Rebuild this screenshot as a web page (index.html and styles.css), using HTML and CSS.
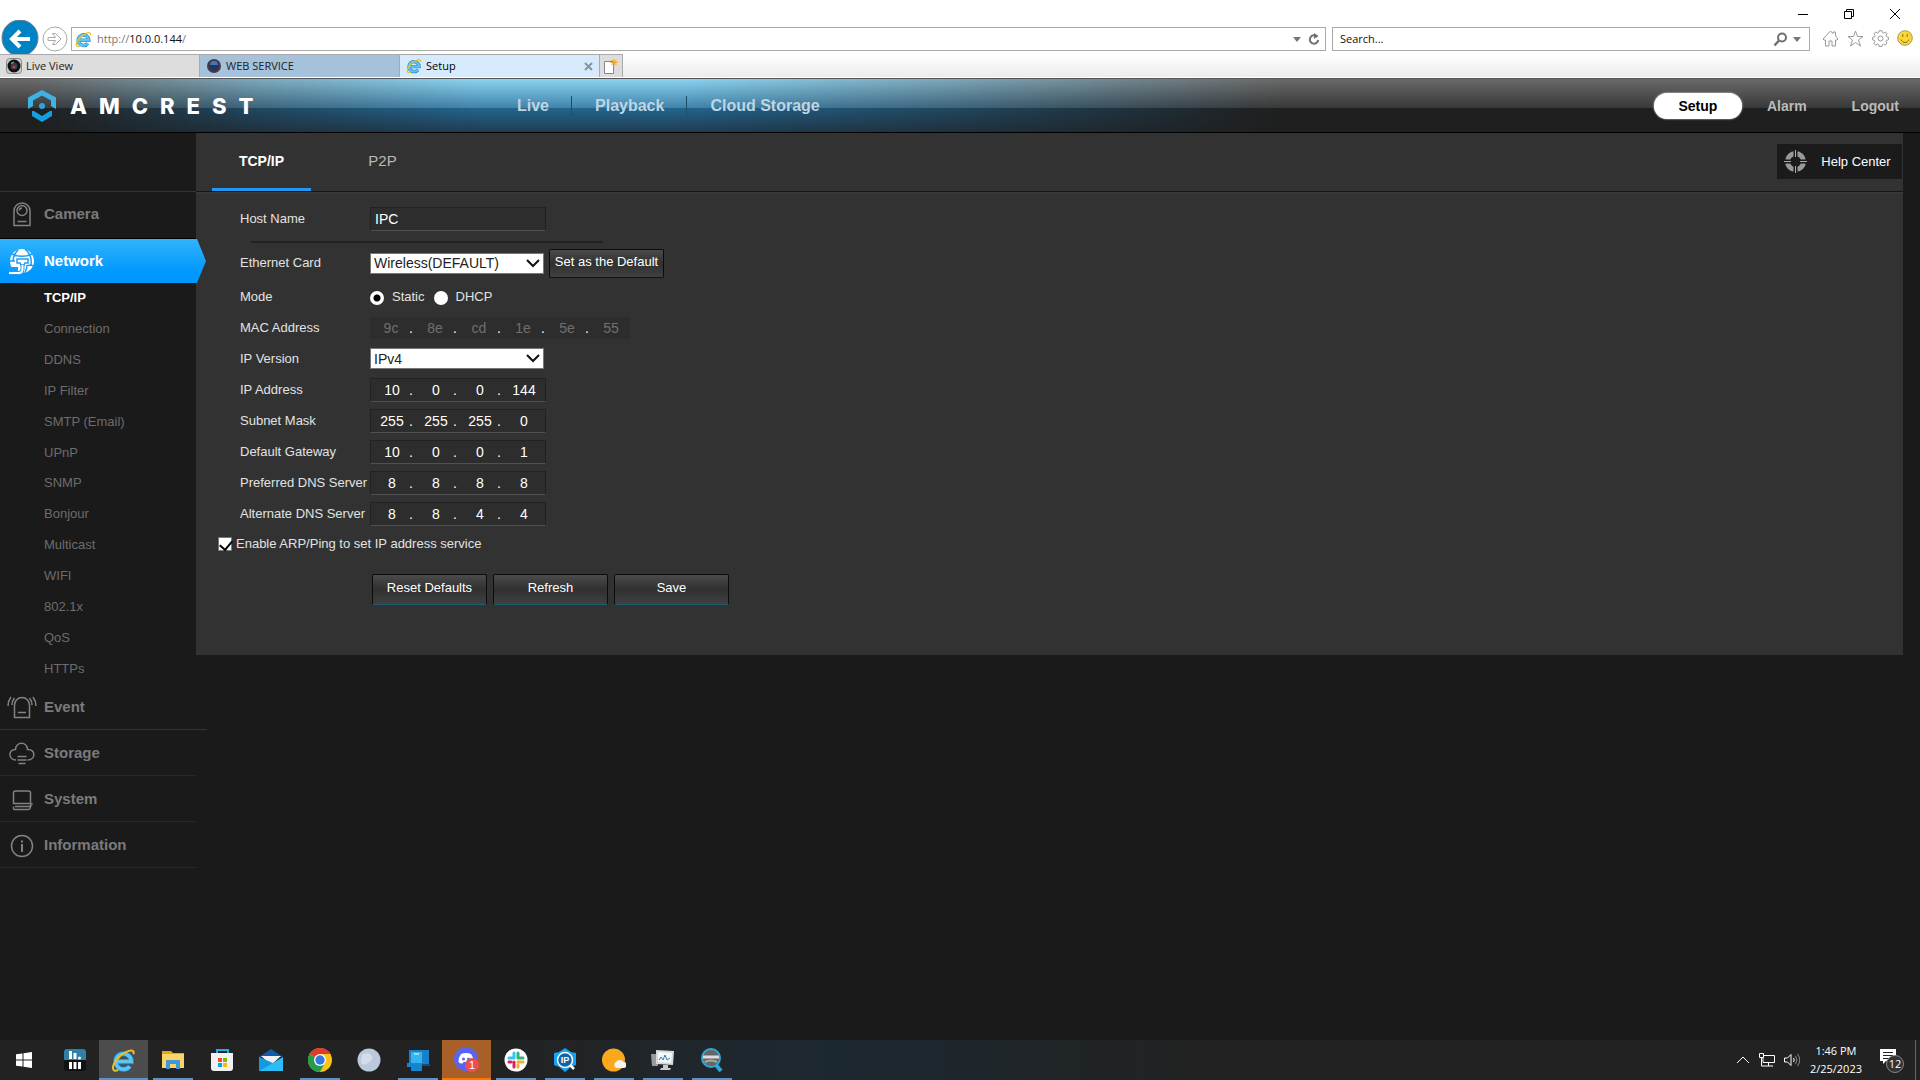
FILE: index.html
```html
<!DOCTYPE html>
<html lang="en">
<head>
<meta charset="utf-8">
<title>Setup</title>
<link rel="stylesheet" href="styles.css">
</head>
<body>
<svg class="defs" aria-hidden="true">
  <symbol id="ie" viewBox="0 0 24 24">
    <path d="M5 13h14.500a7.500 7.500 0 1 0-1.500 4.500" fill="none" stroke="#1c84c6" stroke-width="5"/>
    <path d="M5 13h14.500a7.500 7.500 0 1 0-1.500 4.500" fill="none" stroke="#5cc5f2" stroke-width="3.400"/>
    <path d="M21.500 6c1-3-1-4.500-5-3C9 5.500 1 15 2 20c.5 2.500 3 2 5 1" fill="none" stroke="#f4bd1c" stroke-width="1.900"/>
  </symbol>
</svg>

<header class="browser">
  <div class="window-controls">
    <button type="button" aria-label="Minimize"><svg width="12" height="12" viewBox="0 0 12 12"><path d="M1 6.500h10"/></svg></button>
    <button type="button" aria-label="Restore"><svg width="12" height="12" viewBox="0 0 12 12"><path d="M1.500 3.500h7v7h-7zM3.500 3.500v-2h7v7h-2"/></svg></button>
    <button type="button" aria-label="Close"><svg width="12" height="12" viewBox="0 0 12 12"><path d="M1 1l10 10M11 1L1 11"/></svg></button>
  </div>
  <div class="address-row">
    <button type="button" class="back" aria-label="Back"><svg width="38" height="34" viewBox="0 0 38 34"><circle cx="19" cy="18" r="18" fill="#0083c4" stroke="#6f7c84"/><path d="M12 19h17M19 11l-8 8 8 8" fill="none" stroke="#fff" stroke-width="4"/></svg></button>
    <button type="button" class="forward" aria-label="Forward"><svg width="26" height="26" viewBox="0 0 26 26"><circle cx="13" cy="13" r="12" fill="#fff" stroke="#aaa"/><path d="M6 11.500h7.500l-3-4h3l5.500 5.500-5.500 5.500h-3l3-4H6z" fill="none" stroke="#aaa"/></svg></button>
    <div class="box address">
      <svg width="17" height="17"><use href="#ie"/></svg>
      <a href="#" class="url">http://<b>10.0.0.144</b>/</a>
      <svg width="8" height="5" viewBox="0 0 8 5"><path d="M0 0h8L4 5z" fill="#777"/></svg>
      <svg width="12" height="13" viewBox="0 0 12 13"><path d="M9 3.500a4.200 4.200 0 1 0 1.200 3.500" fill="none" stroke="#707070" stroke-width="2"/><path d="M6 0l4.500 3L6 6z" fill="#707070"/></svg>
    </div>
    <div class="box search">
      <input type="text" placeholder="Search..." aria-label="Search">
      <svg width="15" height="15" viewBox="0 0 15 15"><circle cx="9" cy="5.500" r="4" fill="none" stroke="#707070" stroke-width="2"/><path d="M6 8.500L1.500 13.500" stroke="#707070" stroke-width="2.500"/></svg>
      <svg width="8" height="5" viewBox="0 0 8 5"><path d="M0 0h8L4 5z" fill="#777"/></svg>
    </div>
    <div class="tools">
      <svg width="17" height="17" viewBox="0 0 17 17"><path d="M1 9l7.500-8L11 3.500V2h2.500v4L16 9l-1 1h-1.500v6H10v-5H7v5H3.500v-6H2z"/></svg>
      <svg width="17" height="17" viewBox="0 0 17 17"><path d="M8.500 1l2 5.500h5.500L11.500 10l2 6-5-3.500-5 3.500 2-6L1 6.500h5.500z"/></svg>
      <svg width="17" height="17" viewBox="0 0 17 17"><path d="M7 .7h3l.4 2 1.200.5 1.700-1.200 1.900 1.900L14 5.600l.5 1.100 1.900.5v2.700l-2 .5-.5 1.200 1.200 1.700-1.900 1.900-1.700-1.200-1.100.5-.4 1.900H7l-.4-2-1.200-.5-1.700 1.200-1.900-1.900L3 11.500l-.5-1.100-1.900-.5V7.200l2-.5.500-1.200-1.200-1.700 1.900-1.900 1.700 1.200 1.100-.5z"/><circle cx="8.500" cy="8.500" r="2.500"/></svg>
      <svg width="16" height="16" viewBox="0 0 16 16"><circle cx="8" cy="8" r="7.300" style="fill:#fbd738;stroke:#a99a5a"/><path d="M5.800 4v3M10.200 4v3M4 9.500c1.500 4 6.500 4 8 0" style="stroke:#846d10"/></svg>
    </div>
  </div>
  <nav class="browser-tabs" aria-label="Browser tabs">
    <a href="#" class="btab"><svg width="16" height="16" viewBox="0 0 16 16"><rect x=".5" y=".5" width="15" height="15" rx="3" fill="#ccc" stroke="#888"/><circle cx="8" cy="8" r="6.500" fill="#101010"/><circle cx="8" cy="8" r="3.500" fill="#33404a"/><circle cx="8" cy="9" r="1.500" fill="#d33"/><path d="M5 5.500l3-1.500" stroke="#8cc"/></svg>Live View</a>
    <a href="#" class="btab web"><svg width="16" height="16" viewBox="0 0 16 16"><circle cx="8" cy="8" r="6" fill="#24345f" stroke="#4a3a48" stroke-width="2"/><path d="M4 7a4 4 0 0 1 8 0z" fill="#3f78b5"/></svg>WEB SERVICE</a>
    <a href="#" class="btab current"><svg width="16" height="16"><use href="#ie"/></svg>Setup<svg class="close" width="9" height="9" viewBox="0 0 9 9"><path d="M1 1l7 7M8 1L1 8" stroke="#8494a3" stroke-width="2"/></svg></a>
    <button type="button" class="newtab" aria-label="New tab"><svg width="16" height="17" viewBox="0 0 16 17"><path d="M1.500 3.500h9v12h-9z" fill="#fff" stroke="#888"/><path d="M11 1v7M7.500 4.500h7M8.500 2l5 5M13.500 2l-5 5" stroke="#f3a11f"/></svg></button>
  </nav>
</header>

<div class="app">
  <div class="topbar">
    <a href="#" class="brand">
      <svg width="30" height="33" viewBox="0 0 30 33"><path d="M1 20V8.500L15 1l14 7.500V20l-5-3v-5.500L15 6.500 6 11.500V17z" fill="#3fb2e4"/><circle cx="15" cy="17" r="3" fill="#2aa6de"/><path d="M5 22l2 0 8 5 8-5h2v5l-10 6-10-6z" fill="#13a0e0"/></svg>
      <span class="wordmark">AMCREST</span>
    </a>
    <nav class="views" aria-label="Views">
      <a href="#">Live</a><a href="#">Playback</a><a href="#">Cloud Storage</a>
    </nav>
    <nav class="account" aria-label="Account">
      <a href="#" class="on">Setup</a><a href="#">Alarm</a><a href="#">Logout</a>
    </nav>
  </div>

  <div class="body">
    <nav class="side" aria-label="Settings">
      <a href="#" class="group first"><svg width="32" height="26" viewBox="0 0 32 26"><path d="M8 24.500V10a8 8 0 0 1 16 0v14.500zM11.500 20.500h9"/><circle cx="16" cy="9.500" r="5"/><path d="M13.500 9.500A2.500 2.500 0 0 1 16 7"/></svg>Camera</a>
      <a href="#" class="group active"><svg width="32" height="28" viewBox="0 0 32 28"><circle cx="16" cy="14" r="12" fill="#fff" stroke="none"/><path d="M6 7c5 3 14 3 20 0M3 14h6M12 3c-4 4-5 7-5 11M19 2c5 4 7 9 6 16M20 19c3-1 5-1 8 0M19 26l2-6" stroke="#1d9df5"/><path d="M3 20h9v6H3z" fill="#0f9ffb" stroke="none"/><path d="M11 12h11v4h-3l-1 2h-3l-1-2h-3z" fill="#fff" stroke="#1d9df5"/><path d="M16.500 18v4q0 4-4 4H3" stroke="#1d9df5" stroke-width="4"/><path d="M16.500 18v4q0 4-4 4H3" stroke="#fff" stroke-width="2"/></svg>Network</a>
      <div class="subs">
        <a href="#" class="on">TCP/IP</a><a href="#">Connection</a><a href="#">DDNS</a><a href="#">IP Filter</a><a href="#">SMTP (Email)</a><a href="#">UPnP</a><a href="#">SNMP</a><a href="#">Bonjour</a><a href="#">Multicast</a><a href="#">WIFI</a><a href="#">802.1x</a><a href="#">QoS</a><a href="#">HTTPs</a>
      </div>
      <a href="#" class="group wide"><svg width="32" height="26" viewBox="0 0 32 26"><path d="M8.500 23.500V11a7.500 7.500 0 0 1 15 0v12.500zM12 18.500h8M5 3q-3 4-3 9M8.500 4q-2.500 3-2.500 7M27 3q3 4 3 9M23.500 4q2.500 3 2.500 7"/></svg>Event</a>
      <a href="#" class="group"><svg width="32" height="26" viewBox="0 0 32 26"><path d="M10 20C2 20 2 9 9.500 9.500 10 1 21 1 21.500 9.500 30 9 30 20 21.500 20M11.500 16.500h9M11.500 20h9M12.500 23.500h7"/></svg>Storage</a>
      <a href="#" class="group"><svg width="32" height="26" viewBox="0 0 32 26"><path d="M7.500 7q0-2 2-2h13q2 0 2 2v10.500h-17zM9 20.500h14.500l3-3M7.500 20.500v2q0 1 1 1h14q1 0 1.500-1l1-3"/></svg>System</a>
      <a href="#" class="group"><svg width="32" height="26" viewBox="0 0 32 26"><circle cx="16" cy="14" r="10.500"/><path d="M16 12v8M16 8.500v2" stroke-width="2"/></svg>Information</a>
    </nav>

    <main class="panel">
      <div class="tabs">
        <a href="#" class="on">TCP/IP</a>
        <a href="#">P2P</a>
        <a href="#" class="help"><svg width="23" height="23" viewBox="0 0 23 23"><circle cx="11.500" cy="11.500" r="8" fill="none" stroke="#999" stroke-width="5"/><path d="M11.500 0v8M11.500 15v8M0 11.500h8M15 11.500h8" stroke="#1b1b1b" stroke-width="4"/><path d="M11.500 0v7M11.500 16v7M0 11.500h7M16 11.500h7" stroke="#aaa" stroke-width="1"/></svg>Help Center</a>
      </div>
      <form class="settings">
        <div class="row host"><label for="host">Host Name</label><input id="host" class="text" type="text" value="IPC"></div>
        <hr>
        <div class="row card"><label for="card">Ethernet Card</label><span class="pick"><select id="card"><option>Wireless(DEFAULT)</option></select><svg width="14" height="9" viewBox="0 0 14 9"><path d="M1 1l6 6 6-6"/></svg></span><button type="button" class="btn default">Set as the Default</button></div>
        <div class="row"><span>Mode</span><span class="radios"><input type="radio" name="mode" id="static" checked><label for="static">Static</label><input type="radio" name="mode" id="dhcp"><label for="dhcp">DHCP</label></span></div>
        <div class="row"><span>MAC Address</span><span class="octets mac"><input aria-label="MAC 1" value="9c" disabled><i>.</i><input aria-label="MAC 2" value="8e" disabled><i>.</i><input aria-label="MAC 3" value="cd" disabled><i>.</i><input aria-label="MAC 4" value="1e" disabled><i>.</i><input aria-label="MAC 5" value="5e" disabled><i>.</i><input aria-label="MAC 6" value="55" disabled></span></div>
        <div class="row"><label for="ver">IP Version</label><span class="pick"><select id="ver"><option>IPv4</option></select><svg width="14" height="9" viewBox="0 0 14 9"><path d="M1 1l6 6 6-6"/></svg></span></div>
        <div class="row"><span>IP Address</span><span class="octets"><input aria-label="IP 1" value="10"><i>.</i><input aria-label="IP 2" value="0"><i>.</i><input aria-label="IP 3" value="0"><i>.</i><input aria-label="IP 4" value="144"></span></div>
        <div class="row"><span>Subnet Mask</span><span class="octets"><input aria-label="Mask 1" value="255"><i>.</i><input aria-label="Mask 2" value="255"><i>.</i><input aria-label="Mask 3" value="255"><i>.</i><input aria-label="Mask 4" value="0"></span></div>
        <div class="row"><span>Default Gateway</span><span class="octets"><input aria-label="Gateway 1" value="10"><i>.</i><input aria-label="Gateway 2" value="0"><i>.</i><input aria-label="Gateway 3" value="0"><i>.</i><input aria-label="Gateway 4" value="1"></span></div>
        <div class="row"><span>Preferred DNS Server</span><span class="octets"><input aria-label="Preferred DNS 1" value="8"><i>.</i><input aria-label="Preferred DNS 2" value="8"><i>.</i><input aria-label="Preferred DNS 3" value="8"><i>.</i><input aria-label="Preferred DNS 4" value="8"></span></div>
        <div class="row"><span>Alternate DNS Server</span><span class="octets"><input aria-label="Alternate DNS 1" value="8"><i>.</i><input aria-label="Alternate DNS 2" value="8"><i>.</i><input aria-label="Alternate DNS 3" value="4"><i>.</i><input aria-label="Alternate DNS 4" value="4"></span></div>
        <div class="arp"><input type="checkbox" id="arp" checked><label for="arp">Enable ARP/Ping to set IP address service</label></div>
        <div class="actions"><button type="button" class="btn">Reset Defaults</button><button type="button" class="btn">Refresh</button><button type="button" class="btn">Save</button></div>
      </form>
    </main>
  </div>
</div>

<footer class="taskbar">
  <button type="button" class="start" aria-label="Start"><svg width="16" height="16" viewBox="0 0 16 16"><path d="M0 2.300L6.500 1.400v6.100H0zM7.500 1.200L16 0v7.500H7.500zM0 8.500h6.500v6.100L0 13.700zM7.500 8.500H16V16l-8.500-1.200z" fill="#fff"/></svg></button>
  <button type="button" aria-label="Monitor"><svg width="24" height="24" viewBox="0 0 24 24"><rect x="1" y="1" width="22" height="22" rx="3" fill="#101214"/><path d="M1 12V4q0-3 3-3h16q3 0 3 3v8z" fill="#2f7fa6"/><path d="M7.500 3v8M12 5v6M7.500 14v7M12 14v7M16.500 14v7" stroke="#fff" stroke-width="3"/><circle cx="16.500" cy="10" r="1.500" fill="#fff"/></svg></button>
  <button type="button" class="open focus" aria-label="Internet Explorer"><svg width="25" height="25"><use href="#ie"/></svg></button>
  <button type="button" class="open" aria-label="File Explorer"><svg width="24" height="24" viewBox="0 0 24 24"><path d="M1 3h9l2 2h11v15H1z" fill="#e5a61c"/><path d="M1 6h22v14H1z" fill="#fbd466"/><path d="M5 21v-8q0-1 1-1h12q1 0 1 1v8h-4v-5H9v5z" fill="#3f97d8"/></svg></button>
  <button type="button" aria-label="Store"><svg width="24" height="24" viewBox="0 0 24 24"><path d="M7 6V2h11v4" fill="none" stroke="#1fb0ea" stroke-width="2"/><path d="M1 5h22v15q0 3-3 3H4q-3 0-3-3z" fill="#f1f1f1"/><path d="M8 10h4v4H8z" fill="#f25022"/><path d="M13 10h4v4h-4z" fill="#7fba00"/><path d="M8 15h4v4H8z" fill="#00a4ef"/><path d="M13 15h4v4h-4z" fill="#ffb900"/></svg></button>
  <button type="button" aria-label="Mail"><svg width="24" height="24" viewBox="0 0 24 24"><path d="M0 9l12-8 12 8z" fill="#0f5ca8"/><path d="M2 8h20l-10 9z" fill="#f1f1f1"/><path d="M0 9l12 7 12-7v14H0z" fill="#2dbcf4"/><path d="M0 23l14-8L0 9z" fill="#1498e0"/></svg></button>
  <button type="button" class="open" aria-label="Chrome"><svg width="24" height="24" viewBox="0 0 24 24"><circle cx="12" cy="12" r="12" fill="#fbc318"/><path d="M12 12L1.600 6A12 12 0 0 1 22.400 6H12z" fill="#df3a2d"/><path d="M12 12L1.600 6A12 12 0 0 0 12 24l5-9z" fill="#279b4c"/><circle cx="12" cy="12" r="6" fill="#fff"/><circle cx="12" cy="12" r="4.700" fill="#3279e4"/></svg></button>
  <button type="button" aria-label="Moon"><svg width="24" height="24" viewBox="0 0 24 24"><circle cx="12" cy="12" r="11.500" fill="#bcc8dc"/><path d="M5 7q5-4 9 0t-3 8-7-2z" fill="#d3dce8"/></svg></button>
  <button type="button" class="open" aria-label="Your Phone"><svg width="24" height="24" viewBox="0 0 24 24"><path d="M3 2h20v15H3z" fill="#1780c8"/><path d="M12 16h12v2H12z" fill="#0a4f87"/><path d="M5 4h11v19H5z" fill="#35b4ee"/><path d="M1 15h5v4H1zM5 15h11v8H5z" fill="#1685cf"/><path d="M8 6h5" stroke="#fff"/></svg></button>
  <button type="button" class="alert" aria-label="Discord"><svg width="26" height="26" viewBox="0 0 26 26"><circle cx="12" cy="12" r="12" fill="#5865f2"/><path d="M7 7q5-2 10 0 3 4 2.500 8-2 2-4 1.500l-1-1.500h-5l-1 1.500q-2 .5-4-1.500Q4 11 7 7z" fill="#fff"/><circle cx="9.500" cy="12" r="1.500" fill="#5865f2"/><circle cx="14.500" cy="12" r="1.500" fill="#5865f2"/><circle cx="18" cy="18" r="7" fill="#ed4d53"/><text x="18" y="22" text-anchor="middle" font-size="11" fill="#fff">1</text></svg></button>
  <button type="button" class="open" aria-label="Slack"><svg width="24" height="24" viewBox="0 0 24 24"><circle cx="12" cy="12" r="11.500" fill="#fff"/><g stroke-width="3" stroke-linecap="round"><path d="M10 5v5M5 10h5" stroke="#36c5f0"/><path d="M14 5v5M19 10h-3" stroke="#2eb67d"/><path d="M14 14h5M14 17v2" stroke="#ecb22e"/><path d="M10 14v5M5 14h2" stroke="#e01e5a"/></g></svg></button>
  <button type="button" class="open" aria-label="IP Config"><svg width="24" height="24" viewBox="0 0 24 24"><path d="M12 0l6 4 5 1v12l-5 2-6 5-6-5-5-2V5l5-1z" fill="#16a3ee"/><circle cx="12" cy="12" r="7.500" fill="#1264a8" stroke="#fff" stroke-width="1.500"/><path d="M17 17l4 4" stroke="#fff" stroke-width="2.500"/><text x="12" y="15" text-anchor="middle" font-size="9" font-weight="bold" fill="#fff">IP</text></svg></button>
  <button type="button" class="open" aria-label="Weather"><svg width="24" height="24" viewBox="0 0 24 24"><circle cx="11.500" cy="12" r="11.500" fill="#fba81c"/><path d="M14 20a3.500 3.500 0 0 1 0-6 4.500 4.500 0 0 1 7.500 0 3 3 0 0 1 0 6z" fill="#f4f4f4"/></svg></button>
  <button type="button" class="open" aria-label="Performance"><svg width="24" height="24" viewBox="0 0 24 24"><path d="M0 6h7v12H1z" fill="#9a9a9a"/><path d="M5 2l18 1-1 14-17-1z" fill="#d7d9da"/><path d="M7 4l14 1-1 10-13-1z" fill="#f4f8fa"/><path d="M8 12l2-3 2 3 2-5 2 5 3-2" fill="none" stroke="#2a7fb0"/><path d="M12 17h5v3h3l-1 2H9l1-2h2z" fill="#c9cbcc"/></svg></button>
  <button type="button" class="open" aria-label="Search tool"><svg width="24" height="24" viewBox="0 0 24 24"><circle cx="11" cy="10" r="9" fill="#666" stroke="#35a7cf" stroke-width="2"/><path d="M3 9h16" stroke="#ddd" stroke-width="3"/><path d="M5 14q6-3 12 0" stroke="#aaa" stroke-width="2" fill="none"/><path d="M16 17l5 6" stroke="#28a9dc" stroke-width="4"/></svg></button>
  <div class="tray">
    <svg width="14" height="8" viewBox="0 0 14 8"><path d="M1 7l6-6 6 6"/></svg>
    <svg width="16" height="14" viewBox="0 0 16 14"><path d="M5 2.500h10.500v7H4v-5M9.500 10v3M5 13h9M.5.500h4v4h-4zM2.500 5v8H5"/></svg>
    <svg width="16" height="14" viewBox="0 0 16 14"><path d="M.5 5h3L7 1.500v11L3.500 9h-3zM9.500 5q1.500 2 0 4"/><path d="M11.500 3q3 4 0 8M13.500 1q4.500 6 0 12" style="stroke:#888"/></svg>
    <time datetime="2023-02-25T13:46">1:46 PM<br>2/25/2023</time>
    <svg class="note" width="26" height="26" viewBox="0 0 26 26"><path d="M1 2h16v12H7l-3 3v-3H1z" style="fill:#fff;stroke:none"/><path d="M4 5.500h10M4 8.500h10M4 11.500h6" style="stroke:#222"/><circle cx="16" cy="17" r="8.500" style="fill:#333;stroke:#888"/><text x="16" y="21" text-anchor="middle" font-size="11" fill="#fff">12</text></svg>
  </div>
</footer>
</body>
</html>
```
FILE: styles.css
```css
* { box-sizing: border-box; }
body {
  margin: 0;
  min-height: 100vh;
  display: flex;
  flex-direction: column;
  background: #1a1a1a;
  color: #e2e2e2;
  font: 13px/16px "Liberation Sans", Arial, sans-serif;
}
a { color: inherit; text-decoration: none; }
button, input, select { font: inherit; color: inherit; margin: 0; }
button { padding: 0; border: 0; background: none; display: flex; align-items: center; justify-content: center; }
svg { display: block; flex: none; }
.defs { position: absolute; width: 0; height: 0; }

/* Browser frame */
.browser {
  background: #fff;
  color: #222;
  height: 78px;
  font: 11px/16px "Open Sans", "Noto Sans", sans-serif;
}
.window-controls {
  height: 20px;
  padding: 8px 19px 0 0;
  display: flex;
  justify-content: flex-end;
  gap: 34px;
}
.window-controls svg { fill: none; stroke: #000; }
.address-row { display: flex; align-items: center; height: 34px; padding: 0 7px 0 1px; }
.forward { margin: 4px 3px 0 3px; }
.box {
  display: flex;
  align-items: center;
  height: 24px;
  margin-top: 4px;
  border: 1px solid #aaa;
  background: #fff;
}
.address { flex: 1; padding: 0 5px 0 3px; gap: 5px; margin-right: 6px; }
.url { flex: 1; color: #777; }
.url b { font-weight: 400; color: #111; }
.address .url + svg { margin-right: 2px; }
.search { width: 478px; padding: 0 8px 0 7px; gap: 5px; }
.search input { flex: 1; border: 0; padding: 0; outline: 0; }
.search input::placeholder { color: #111; opacity: 1; }
.tools { display: flex; gap: 8px; padding: 2px 0 0 12px; }
.tools svg { fill: none; stroke: #999; }
.browser-tabs {
  display: flex;
  height: 23px;
  background: linear-gradient(#fff, #ececec);
}
.btab {
  width: 200px;
  display: flex;
  align-items: center;
  gap: 4px;
  padding: 0 10px 0 6px;
  border: 1px solid #aaa;
  border-width: 1px 1px 0 0;
  background: #ddd;
}
.btab.web { background: #a6c1da; }
.btab.current { background: #d7eafb; color: #000; padding-right: 6px; }
.btab .close { margin-left: auto; }
.newtab { width: 23px; background: #ddd; border: 1px solid #aaa; border-width: 1px 1px 0 0; }

/* Top navigation */
.app { flex: 1; }
.topbar {
  position: relative;
  isolation: isolate;
  display: flex;
  align-items: center;
  height: 55px;
  border-top: 1px solid #555;
  border-bottom: 1px solid #000;
  background: linear-gradient(#6a6a6a, #383838 29px, #1f1f1f 29px, #1f1f1f);
}
.topbar::before {
  content: "";
  position: absolute;
  inset: 0;
  z-index: -1;
  background: linear-gradient(#8bd3f0, #4083ab 29px, #23658f 29px, #203d52);
  -webkit-mask-image: linear-gradient(90deg, transparent 30px, #0009 260px, #000 480px, #000 680px, #0009 940px, transparent 1280px);
  mask-image: linear-gradient(90deg, transparent 30px, #0009 260px, #000 480px, #000 680px, #0009 940px, transparent 1280px);
}
.brand { display: flex; align-items: center; gap: 13px; width: 490px; padding-left: 27px; }
.wordmark { font: 800 22px/28px Inter, "Open Sans", sans-serif; letter-spacing: 12px; color: #fff; }
.views { display: flex; color: #bfd6e2; font-weight: bold; font-size: 16px; line-height: 20px; flex: 1; }
.views a { padding: 0 22px 0 23px; }
.views a:first-child { padding-left: 27px; }
.views a + a { border-left: 1px solid #1c4c68; }
.account { display: flex; align-items: center; gap: 25px; padding-right: 21px; color: #bbb; font-weight: bold; font-size: 14px; }
.account .on {
  width: 88px;
  line-height: 26px;
  text-align: center;
  border-radius: 13px;
  background: #fff;
  color: #000;
  box-shadow: 0 0 2px #fff;
}
.account a + a + a { margin-left: 20px; }

/* Settings menu */
.body { display: flex; align-items: flex-start; }
.side { width: 196px; flex: none; padding-top: 58px; }
.group {
  height: 46px;
  display: flex;
  align-items: center;
  gap: 6px;
  padding-left: 6px;
  border-bottom: 1px solid #282828;
  color: #7b7b7b;
  font-weight: bold;
  font-size: 15px;
}
.group svg { fill: none; stroke: #828282; stroke-width: 1.5; }
.group.first { height: 48px; padding-bottom: 2px; border-top: 1px solid #333; border-bottom-color: #000; }
.group.active {
  height: 44px;
  margin-right: -10px;
  border: 0;
  color: #fff;
  background: linear-gradient(#32b4fa, #0098ff 75%);
  clip-path: polygon(0 0, 197px 0, 100% 50%, 197px 100%, 0 100%);
  position: relative;
}
.group.wide { margin-right: -11px; border-color: #333; }
.subs { display: grid; grid-auto-rows: 1fr; align-items: center; height: 401px; padding-left: 44px; color: #6c6c6c; }
.subs .on { color: #fff; font-weight: bold; }

/* Settings panel */
.panel { flex: 1; margin-right: 17px; background: #323232; }
.tabs {
  display: flex;
  height: 59px;
  padding-left: 16px;
  border-bottom: 1px solid #161616;
  font-size: 15px;
  color: #bbb;
}
.tabs > a { display: flex; align-items: center; justify-content: center; width: 99px; border-bottom: 3px solid transparent; margin-right: 22px; }
.tabs > .on { color: #fff; font-weight: bold; border-color: #2196f3; font-size: 14px; }
.tabs > .help {
  width: 125px;
  height: 35px;
  margin: 11px 1px 0 auto;
  padding-right: 4px;
  gap: 14px;
  border: 0;
  background: #1b1b1b;
  color: #fff;
  font-size: 13px;
}
.settings { padding: 10px 22px 50px; border-top: 2px solid #383838; }
.row { display: flex; align-items: center; height: 31px; padding-left: 22px; }
.row > :first-child { width: 130px; flex: none; white-space: nowrap; }
.row.host { height: 30px; }
.row.card { height: 36px; }
hr { width: 352px; height: 2px; margin: 7px 0 2px 33px; border: 0; background: #222; }
.text, .octets {
  width: 176px;
  height: 24px;
  border: 1px solid #222;
  border-bottom-color: #505050;
  background: #2d2d2d;
  color: #fff;
  font-size: 14px;
}
.text { padding: 0 4px; }
.octets { display: flex; align-items: center; overflow: hidden; }
.octets input {
  width: 36px;
  flex: none;
  border: 0;
  padding: 0 0 0 6px;
  background: none;
  text-align: center;
}
.octets i { width: 8px; flex: none; text-align: center; font-style: normal; }
.octets.mac { width: 260px; height: 22px; border-color: #2d2d2d; }
.mac input { color: #707070; padding-left: 4px; }
.pick { position: relative; width: 174px; }
.pick select {
  appearance: none;
  display: block;
  width: 100%;
  height: 21px;
  padding: 0 3px;
  border: 1px solid #777;
  border-radius: 0;
  background: #fff;
  color: #222;
  font-size: 14px;
}
.pick svg { position: absolute; right: 4px; top: 6px; fill: none; stroke: #111; stroke-width: 2; pointer-events: none; }
.btn {
  width: 115px;
  height: 31px;
  padding-bottom: 3px;
  border: 1px solid #0c0c0c;
  border-radius: 2px;
  border-bottom: 1px solid #1d5d74;
  background: linear-gradient(#4b4b4b, #303030 50%, #404040);
  color: #fff;
}
.btn.default { height: 29px; margin-left: 5px; border-bottom-color: #111; }
.radios { display: flex; align-items: center; }
.radios label { margin: 0 9px 0 8px; }
input[type="radio"] { appearance: none; width: 14px; height: 14px; border-radius: 50%; background: #fff; margin-top: 3px; }
input[type="radio"]:checked { background: radial-gradient(circle, #000 3px, #fff 4px); }
.arp { display: flex; align-items: center; gap: 4px; height: 30px; }
.arp input { appearance: none; width: 14px; height: 14px; border: 1px solid #777; background: #fff; position: relative; }
.arp input:checked::after {
  content: "";
  position: absolute;
  left: 3px;
  top: 0;
  width: 6px;
  height: 10px;
  border: solid #000;
  border-width: 0 2px 2px 0;
  transform: rotate(40deg);
}
.actions { display: flex; gap: 6px; padding: 15px 0 0 154px; }

/* Desktop taskbar */
.taskbar {
  display: flex;
  height: 40px;
  background: linear-gradient(90deg, #222 500px, #1f272d 720px, #1c2830 840px, #222 1200px);
}
.taskbar button { width: 49px; background: no-repeat bottom / 40px 2px; }
.taskbar .start { width: 48px; margin-right: 2px; }
.taskbar .open { background-image: linear-gradient(#5a93c4, #5a93c4); }
.taskbar .focus { background-color: #4c4c4c; background-size: 100% 2px; }
.taskbar .alert { background-color: #a95f28; background-image: linear-gradient(#ff7600, #ff7600); background-size: 100% 2px; }
.tray {
  margin: 0 4px 0 auto;
  padding-right: 10px;
  border-right: 1px solid #666;
  display: flex;
  align-items: center;
  gap: 9px;
  color: #fff;
  font: 11px/18px "Open Sans", "Noto Sans", sans-serif;
}
.tray svg { fill: none; stroke: #fff; }
.tray svg text { fill: #fff; stroke: none; }
.tray time { text-align: center; padding: 0 8px 0 1px; }
```
